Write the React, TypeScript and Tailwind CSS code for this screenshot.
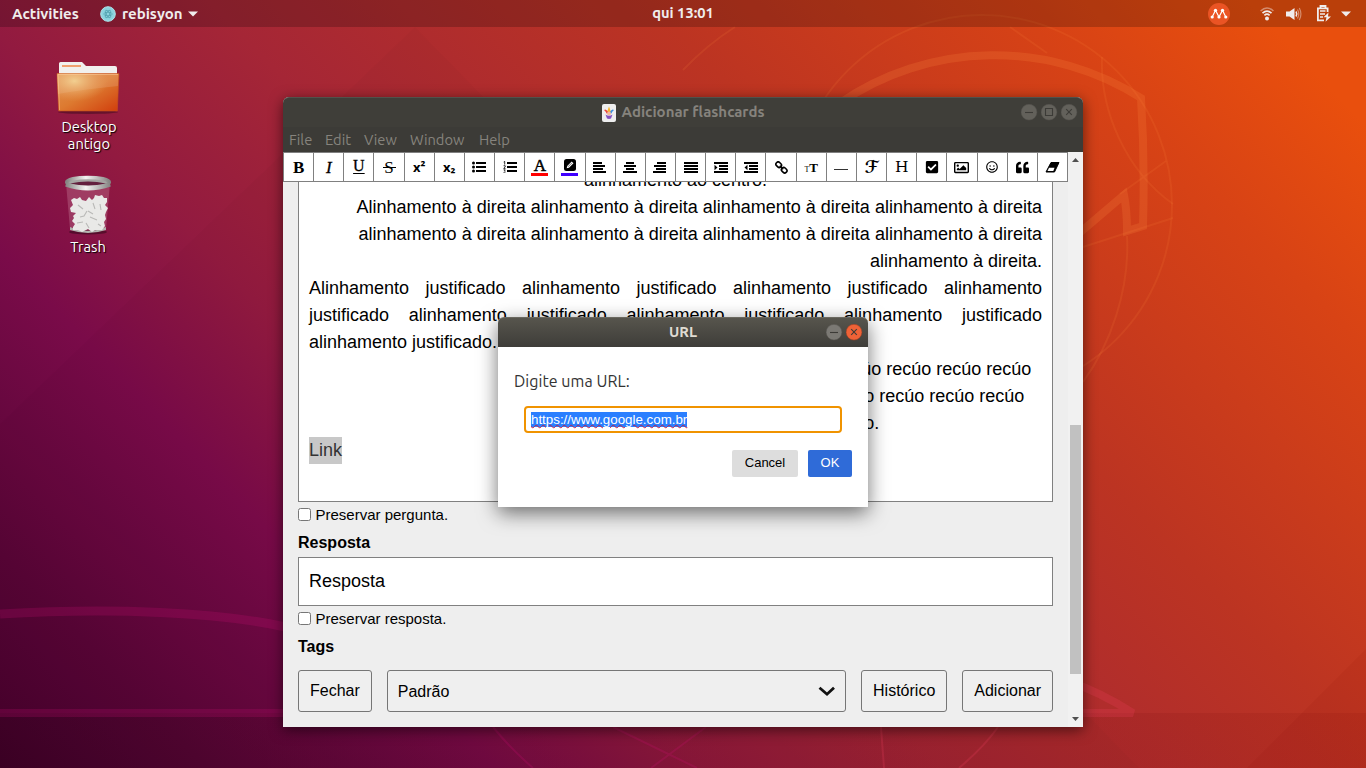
import type { ReactNode } from 'react';
import { FaCheckSquare, FaQuoteLeft, FaRegImage, FaRegSmile } from 'react-icons/fa';

function Wallpaper() {
  return (
    <svg className="absolute inset-0" width="1366" height="768" viewBox="0 0 1366 768">
      <defs>
        <linearGradient id="bg" gradientUnits="userSpaceOnUse" x1="0" y1="768" x2="1076" y2="-264">
          <stop offset="0" stopColor="#440129" />
          <stop offset=".1" stopColor="#570536" />
          <stop offset=".24" stopColor="#7a0b49" />
          <stop offset=".34" stopColor="#921a40" />
          <stop offset=".457" stopColor="#a52636" />
          <stop offset=".67" stopColor="#bc3422" />
          <stop offset=".856" stopColor="#d84315" />
          <stop offset=".96" stopColor="#e94f0d" />
        </linearGradient>
        <linearGradient id="floor">
          <stop offset="0" stopColor="#000" stopOpacity=".12" />
          <stop offset="1" stopColor="#700" stopOpacity=".1" />
        </linearGradient>
      </defs>
      <rect width="1366" height="768" fill="url(#bg)" />
      <path d="M0 424 L415 27 L1366 1000 L0 1000Z" fill="#000" opacity=".018" />
      <path d="M1366 649 L1247 768 H1366Z" fill="#7a0000" opacity=".07" />
      <rect y="713" width="1366" height="55" fill="url(#floor)" />
      <g fill="none" stroke="#d0107a" strokeOpacity=".2">
        <path d="M0 614 Q85 609 160 612.5 T283 626.5 L300 629" strokeWidth="9" />
        <path d="M0 713 H300" strokeWidth="8" />
        <path d="M493 727 Q510 748 533 768 M613 727 L697 768 M706 727 L651 768" strokeWidth="2" />
      </g>
      <g fill="none" stroke="#f04060" strokeOpacity=".22">
        <path d="M1070 682 Q1100 692 1133 713 H1070" strokeWidth="8" strokeLinejoin="bevel" />
        <path d="M881 727 L884 768 M998 727 Q985 746 959 768" strokeWidth="2" />
      </g>
      <g fill="none" stroke="#ff8a40" strokeOpacity=".2">
        <path d="M840 103 A273 273 0 0 1 1141 98 Q1145 160 1143 226 L1127 231 Q1127 210 1124 195 L1070 241" strokeWidth="8" />
        <g strokeOpacity=".13" strokeWidth="2">
          <circle cx="982" cy="205" r="190" />
          <path d="M683 70 Q708 44 735 27 M1010 27 L1047 53 M1102 57 C1100 110 1125 170 1173 204 M1166 161 L1120 194 M1173 218 L1083 247 M1127 236 C1130 290 1110 345 1083 382" />
        </g>
      </g>
    </svg>
  );
}

function TopBar() {
  return (
    <div className="relative flex h-[27px] items-center justify-between bg-black/20 text-[15px] font-bold text-[#f0ecec]">
      <div className="flex h-full flex-1 items-center pl-3 pt-px">
        <span className="w-[68px] whitespace-nowrap">Activities</span>
        <svg className="mb-px ml-[20px]" width="16" height="16" viewBox="0 0 16 16">
          <circle cx="8" cy="8" r="7.3" fill="#8bd3de" stroke="#aee4ea" />
          <g fill="none" stroke="#4f9fac" strokeWidth=".7">
            <ellipse cx="8" cy="8" rx="4.3" ry="1.8" />
            <ellipse cx="8" cy="8" rx="4.3" ry="1.8" transform="rotate(60 8 8)" />
            <ellipse cx="8" cy="8" rx="4.3" ry="1.8" transform="rotate(120 8 8)" />
          </g>
        </svg>
        <span className="ml-[6px] w-[61px] whitespace-nowrap">rebisyon</span>
        <svg className="mb-px ml-[5px]" width="10" height="6"><path d="M0 .5 H10 L5 5.5Z" fill="#f0ecec" /></svg>
      </div>
      <span className="whitespace-nowrap pl-[3px] text-[14.700px]">qui 13:01</span>
      <div className="flex h-full flex-1 items-center justify-end pr-[15px]">
        <svg width="22" height="22" viewBox="0 0 22 22">
          <circle cx="11" cy="11" r="11" fill="#ea5424" />
          <path d="M4.200 14 L7.500 7.300 L11 14 L14.500 7.300 L17.800 14" fill="none" stroke="#fff" strokeWidth="1.200" />
          <g fill="#fff"><circle cx="4.200" cy="14" r="1.600" /><circle cx="7.500" cy="7.300" r="1.600" /><circle cx="11" cy="14" r="1.600" /><circle cx="14.500" cy="7.300" r="1.600" /><circle cx="17.800" cy="14" r="1.600" /></g>
        </svg>
        <svg className="ml-[30px]" width="14" height="14" viewBox="0 0 14 14" fill="none" strokeWidth="1.6">
          <path d="M.6 4 Q7 -2 13.4 4" stroke="#fff" opacity=".4" />
          <path d="M2.5 6.2 Q7 2 11.5 6.2 M4.4 8.4 Q7 6 9.6 8.4" stroke="#f0ecec" />
          <circle cx="7" cy="11.6" r="2" fill="#f0ecec" />
        </svg>
        <svg className="ml-[12px]" width="17" height="14" viewBox="0 0 17 14" fill="none">
          <path d="M0 4.500 H3.500 L8.500 1 V13 L3.500 9.500 H0Z" fill="#f0ecec" />
          <path d="M10 4.500 Q11.500 7 10 9.500" stroke="#f0ecec" strokeWidth="1.5" />
          <path d="M11.500 2.5 Q14 7 11.500 11.5 M13.300 1 Q16.500 7 13.300 13" stroke="#fff" opacity=".4" strokeWidth="1.2" />
        </svg>
        <svg className="ml-[13px]" width="15" height="17" viewBox="0 0 15 17">
          <path d="M4.5 2.6 V1 H9.5 V2.6 M11.600 7 V3.300 H1.900 V15.300 H8" fill="none" stroke="#f0ecec" strokeWidth="1.8" />
          <path d="M4 6 H9.5 M4 9 H9 M4 12 H7" stroke="#f0ecec" strokeWidth="1.5" />
          <path d="M12.5 7.5 L7.5 12.2 H10.5 L9.5 16.8 L15 11.5 H12Z" fill="#f0ecec" />
        </svg>
        <svg className="ml-[10px]" width="10" height="6"><path d="M0 .5 H10 L5 5.5Z" fill="#f0ecec" /></svg>
      </div>
    </div>
  );
}

function FolderIcon() {
  return (
    <svg width="64" height="54" viewBox="0 0 64 54">
      <defs>
        <linearGradient id="folder" x1="0" y1="0" x2="1" y2="1">
          <stop offset="0" stopColor="#e29452" /><stop offset=".5" stopColor="#dd7a30" /><stop offset="1" stopColor="#d13d0c" />
        </linearGradient>
        <radialGradient id="glow" cx=".28" cy=".2" r=".55"><stop offset="0" stopColor="#f2cf90" /><stop offset="1" stopColor="#e9a060" stopOpacity="0" /></radialGradient>
      </defs>
      <ellipse cx="32" cy="51" rx="30" ry="2" fill="#000" opacity=".3" />
      <path d="M3 14 V2.500 Q3 1 4.500 1 H26 L30 5 H59 Q61 5 61 7 V14Z" fill="#f1f0ee" />
      <rect x="6" y="4" width="19" height="2" fill="#f0a070" />
      <path d="M1 12.500 H63 L61.3 50 H2.7Z" fill="url(#folder)" stroke="#c8501c" strokeWidth=".6" />
      <path d="M1.5 13 H62.5 L62 25 Q30 28 2 33Z" fill="#fff" opacity=".12" />
      <path d="M1 12.500 H63 L61.3 50 H2.7Z" fill="url(#glow)" />
      <path d="M2 13.500 H62 M2 13.500 L3.5 49" stroke="#ffd0a0" opacity=".5" fill="none" />
    </svg>
  );
}

function TrashIcon() {
  return (
    <svg width="48" height="60" viewBox="0 0 48 60">
      <defs>
        <linearGradient id="rim" x1="0" x2="1"><stop offset="0" stopColor="#858583" /><stop offset=".45" stopColor="#f4f4f2" /><stop offset="1" stopColor="#858583" /></linearGradient>
      </defs>
      <ellipse cx="24" cy="57" rx="19" ry="2.5" fill="#000" opacity=".35" />
      <path d="M2 8 L6 54 Q24 60 42 54 L46 8Z" fill="#d8a0b4" opacity=".28" />
      <path d="M6 52 Q24 60 42 52 L42 55 Q24 61 6 55Z" fill="#b4b4b0" />
      <path d="M7 25 L10 23 L13 24 L16 22 L18 25 L22 26 L25 22 L28 25 L30 23 L31 20 L35 21 L38 20 L40 23 L43 23 L43 27 L41 30 L44 33 L42 37 L41 40 L42 44 L40 47 L41 51 L38 55 L31 55 L28 57 L24 54 L18 57 L14 55 L9 55 L9 52 L11 49 L8 46 L10 43 L9 41 L12 38 L7 37 L6 33 L9 30Z" fill="#e9e9e7" />
      <path d="M14 30 L19 34 M23 36 L20 41 L16 42 M24 36 L29 39 M29 28 L31 34 M26 42 L33 45 M13 48 L19 47 M22 48 L25 53 M36 29 L37 35 M34 49 L37 51" stroke="#b9b9b7" strokeWidth="1.100" fill="none" />
      <ellipse cx="24" cy="7.2" rx="21.3" ry="4.800" fill="#a5a5a2" stroke="url(#rim)" strokeWidth="3.500" />
      <path d="M6 8.500 Q24 4.500 42 8.500 Q24 12.500 6 8.500Z" fill="#63203e" />
      <path d="M1.800 9.5 Q24 17.500 46.200 9.5" fill="none" stroke="url(#rim)" strokeWidth="4" />
    </svg>
  );
}

function DesktopIcons() {
  return (
    <div className="relative flex w-[176px] flex-col items-center pt-[34px] text-center text-[14.700px] leading-[17px] text-white [text-shadow:1px_1px_1px_#000]">
      <FolderIcon />
      <div className="mt-[3px] w-[64px] pl-[2px]">Desktop antigo</div>
      <div className="mt-[23px]"><TrashIcon /></div>
      <div className="mt-[3px]">Trash</div>
    </div>
  );
}

function AlignIcon({ rows }: { rows: [number, number][] }) {
  return (
    <svg width="14" height="11" viewBox="0 0 14 11">
      {rows.map(([x, w], i) => <rect key={i} x={x} y={i * 3} width={w} height="2" />)}
    </svg>
  );
}

function IndentIcon({ out }: { out?: boolean }) {
  return (
    <svg width="14" height="11" viewBox="0 0 14 11">
      <path d="M0 0H14V2H0Z M5 3H14V5H5Z M5 6H14V8H5Z M0 9H14V11H0Z" />
      <path d={out ? 'M3.5 2.800 V8.200 L.5 5.500Z' : 'M.5 2.800 V8.200 L3.500 5.500Z'} />
    </svg>
  );
}

function Letter({ children, cls = '' }: { children: ReactNode; cls?: string }) {
  return <span className={`font-['Liberation_Serif',serif] text-[17px] leading-none ${cls}`}>{children}</span>;
}

const tools: ReactNode[] = [
  <Letter cls="font-bold">B</Letter>,
  <Letter cls="italic [-webkit-text-stroke:0.3px_#000]">I</Letter>,
  <Letter cls="-mt-[2px] !text-[16px] underline decoration-1 underline-offset-[2px] [-webkit-text-stroke:0.3px_#000]">U</Letter>,
  <span className="relative flex items-center justify-center"><Letter>S</Letter><i className="absolute h-px w-[13px] bg-black" /></span>,
  <span className="pt-[2px] text-[13px] font-bold">x²</span>,
  <span className="pt-[2px] text-[13px] font-bold">x₂</span>,
  <svg width="14" height="12" viewBox="0 0 14 12"><circle cx="1.500" cy="2" r="1.500" /><circle cx="1.500" cy="6" r="1.500" /><circle cx="1.500" cy="10" r="1.500" /><path d="M4 1H14V3H4Z M4 5H14V7H4Z M4 9H14V11H4Z" /></svg>,
  <svg width="14" height="12" viewBox="0 0 14 12"><path d="M4 1H14V3H4Z M4 5H14V7H4Z M4 9H14V11H4Z" /><path d="M.7 1 L1.700 .4 V3.600 M.6 4.700 H2.200 V6 L.7 7.400 H2.500 M.6 8.800 H2.200 L1.500 10.100 Q2.600 10.500 2 11.500 T.5 11.700" fill="none" stroke="#000" strokeWidth=".8" /></svg>,
  <span className="flex flex-col items-center pt-[1px]"><Letter cls="h-[14px] !leading-[13px] [-webkit-text-stroke:0.500px_#000]">A</Letter><i className="h-[3px] w-[17px] bg-[#ff0000]" /></span>,
  <span className="flex flex-col items-center pt-[1px]"><svg width="12" height="12" viewBox="0 0 12 12"><rect width="12" height="12" rx="2.500" /><path d="M2.700 9.300 L3.200 7 L7.700 2.500 L9.500 4.300 L5 8.800Z" fill="#fff" /><path d="M4 7.800 L8 3.800" stroke="#000" strokeWidth=".5" /></svg><i className="mt-[2px] h-[3px] w-[17px] bg-[#4000ff]" /></span>,
  <AlignIcon rows={[[0, 9], [0, 12], [0, 10], [0, 13]]} />,
  <AlignIcon rows={[[3, 8], [1, 12], [3, 8], [0, 14]]} />,
  <AlignIcon rows={[[4, 9], [1, 12], [3, 10], [0, 13]]} />,
  <AlignIcon rows={[[0, 14], [0, 14], [0, 14], [0, 14]]} />,
  <IndentIcon />,
  <IndentIcon out />,
  <svg width="13" height="13" viewBox="0 0 13 13" fill="none" stroke="#000" strokeWidth="1.600"><rect x="-2.900" y="-2.200" width="5.800" height="4.400" rx="2" transform="translate(3.700 3.700) rotate(45)" /><rect x="-2.900" y="-2.200" width="5.800" height="4.400" rx="2" transform="translate(9.200 9.200) rotate(45)" /><path d="M4.800 4.800 L8.200 8.200" /></svg>,
  <span className="flex items-baseline pt-[1px] font-['Liberation_Serif',serif] leading-none"><span className="text-[8px]">T</span><span className="text-[13px] font-bold">T</span></span>,
  <i className="mt-[4px] h-px w-[14px] bg-[#333]" />,
  <span className="pt-[1px] font-['DejaVu_Serif','DejaVu_Sans',serif] text-[17px] font-bold leading-none">ℱ</span>,
  <span className="pt-[2px] font-['DejaVu_Serif',serif] text-[15.500px] leading-none">H</span>,
  <FaCheckSquare size={14} />,
  <FaRegImage size={15} />,
  <FaRegSmile size={12} />,
  <FaQuoteLeft size={13} />,
  <svg width="15" height="11" viewBox="0 0 15 11"><path d="M6 .5 H14 L9.500 10 H1Z" fill="#000" stroke="#000" strokeLinejoin="round" /><path d="M4 5.800 H9.500 L8.300 9 H2.500Z" fill="#fff" /></svg>,
];

function WindowButton({ kind, close, dim }: { kind: 'min' | 'max' | 'close'; close?: boolean; dim?: boolean }) {
  const fill = close ? '#ee6237' : dim ? '#63615b' : '#7b7974';
  const d = kind === 'min' ? 'M4 8.500H12' : kind === 'max' ? 'M4.500 4.500H11.500V11.500H4.500Z' : 'M5.200 5.200L10.800 10.800M10.800 5.200L5.200 10.800';
  return (
    <svg width="17" height="17" viewBox="0 0 17 17">
      <circle cx="8" cy="8.200" r="7.900" fill={fill} stroke={close ? '#a03c20' : '#55534e'} strokeWidth=".5" />
      <path d={d} fill="none" stroke="#3c3b37" strokeWidth="1.100" />
    </svg>
  );
}

function Joker() {
  return (
    <svg width="14" height="18" viewBox="0 0 14 18">
      <rect width="14" height="18" rx="2" fill="#eeeeee" />
      <path d="M5 8 L7 2.500 L9 8Z" fill="#f7b52c" />
      <path d="M6.500 9 Q4.500 4 2 6 Q3.500 7 5 10Z" fill="#e8453c" />
      <path d="M7.500 9 Q9.500 4 12 6 Q10.500 7 9 10Z" fill="#3c8fe0" />
      <circle cx="7" cy="9.500" r="2" fill="#f0b8a0" />
      <path d="M3.500 10.500 Q7 13 10.500 10.500 L9 14.500 L7 15 L5 14.500Z" fill="#8450c0" />
    </svg>
  );
}

function Preserve({ label }: { label: string }) {
  return (
    <div className="flex h-[26px] items-center text-[15px]">
      <span className="mb-[2px] mr-[4.500px] h-[13px] w-[13px] rounded-[2.500px] border border-[#767676] bg-white" />
      {label}
    </div>
  );
}

function ActionButton({ label }: { label: string }) {
  return <button className="h-[42px] rounded-[3px] border border-[#767676] bg-[#efefef] px-[11px] text-[16px]">{label}</button>;
}

function FlashcardWindow() {
  return (
    <div className="absolute left-[283px] top-[97px] flex h-[630px] w-[800px] flex-col rounded-t-[6px] bg-[#eeeeee] shadow-[0_3px_14px_rgba(0,0,0,0.55)]">
      <div className="grid h-[30px] grid-cols-[1fr_auto_1fr] items-center rounded-t-[6px] border-t border-[#52514b] bg-[#3f3e39] text-[15px] font-bold text-[#86837d]">
        <span />
        <div className="flex items-center gap-[6px]"><Joker /><span className="w-[143px] whitespace-nowrap">Adicionar flashcards</span></div>
        <div className="flex justify-end gap-[3px] pr-[5px]"><WindowButton kind="min" dim /><WindowButton kind="max" dim /><WindowButton kind="close" dim /></div>
      </div>
      <div className="flex h-[25px] items-center bg-[#3c3b37] pl-[6px] pt-[1px] text-[14.700px] text-[#86837d]">
        <span className="w-[36px]">File</span><span className="w-[39px]">Edit</span><span className="w-[46px]">View</span><span className="w-[69px]">Window</span><span>Help</span>
      </div>
      <div className="flex min-h-0 flex-1 font-['Liberation_Sans',Arial,sans-serif] text-black">
        <div className="flex w-[785px] flex-col">
          <div className="grid h-[30px] shrink-0 grid-cols-[repeat(26,minmax(0,1fr))] border-y border-r border-[#808080] bg-white">
            {tools.map((t, i) => (
              <div key={i} className="flex items-center justify-center border-l border-[#808080] font-['Noto_Sans',sans-serif]">{t}</div>
            ))}
          </div>
          <div className="min-h-0 flex-1 overflow-hidden px-[15px]">
            <div className="-mt-[15px] h-[335px] border-x border-b border-[#808080] bg-white px-[10px] text-[18px] leading-[27px]">
              <p className="text-center">alinhamento ao centro.</p>
              <p className="text-right">Alinhamento à direita alinhamento à direita alinhamento à direita alinhamento à direita alinhamento à direita alinhamento à direita alinhamento à direita alinhamento à direita alinhamento à direita.</p>
              <p className="text-justify">Alinhamento justificado alinhamento justificado alinhamento justificado alinhamento justificado alinhamento justificado alinhamento justificado alinhamento justificado alinhamento justificado.</p>
              <p className="pl-[220px]">Recúo recúo recúo recúo recúo recúo recúo recúo recúo recúo recúo recúo recúo recúo recúo recúo recúo recúo recúo recúo recúo recúo recúo recúo recúo recúo recúo.</p>
              <p><span className="inline-block bg-[#c8c8c8] text-[#333]">Link</span></p>
            </div>
            <Preserve label="Preservar pergunta." />
            <div className="flex h-[29px] items-center text-[16px] font-bold">Resposta</div>
            <div className="flex h-[49px] items-center border border-[#808080] bg-white px-[10px] text-[18px]">Resposta</div>
            <Preserve label="Preservar resposta." />
            <div className="flex h-[29px] items-center text-[16px] font-bold">Tags</div>
            <div className="mt-[9px] flex gap-[15px]">
              <ActionButton label="Fechar" />
              <div className="flex h-[42px] flex-1 items-center justify-between rounded-[3px] border border-[#767676] bg-[#efefef] pl-[10px] pr-[10px] pt-[2px] text-[16px]">
                Padrão
                <svg className="mb-px" width="17" height="11" viewBox="0 0 17 11"><path d="M1.500 1.700 L9 8.200 L16 1.700" fill="none" stroke="#111" strokeWidth="2.800" /></svg>
              </div>
              <ActionButton label="Histórico" />
              <ActionButton label="Adicionar" />
            </div>
          </div>
        </div>
        <div className="flex w-[15px] flex-col items-center bg-[#f1f1f1]">
          <svg className="mt-[6px]" width="7" height="4"><path d="M0 4 L3.500 0 L7 4Z" fill="#505050" /></svg>
          <div className="mt-[263px] h-[249px] w-[11px] bg-[#c1c1c1]" />
          <svg className="mt-[43px]" width="7" height="4"><path d="M0 0 L3.500 4 L7 0Z" fill="#505050" /></svg>
        </div>
      </div>
    </div>
  );
}

function UrlDialog() {
  return (
    <div className="absolute left-[498px] top-[317px] flex h-[190px] w-[370px] flex-col rounded-t-[6px] bg-white shadow-[0_6px_20px_rgba(0,0,0,0.55)]">
      <div className="grid h-[30px] grid-cols-[1fr_auto_1fr] items-center rounded-t-[6px] border-t border-[#6a685f] bg-gradient-to-b from-[#57554d] to-[#3e3d39] text-[14.700px] font-bold text-[#dfdbd2]">
        <span /><span>URL</span>
        <div className="flex justify-end gap-[3px] pr-[5px]"><WindowButton kind="min" /><WindowButton kind="close" close /></div>
      </div>
      <div className="flex flex-1 flex-col px-4 pt-[22px]">
        <div className="h-[24px] whitespace-nowrap text-[16px] leading-[24px] tracking-[0.05px] text-[#333]">Digite uma URL:</div>
        <div className="mx-[10px] mt-[13px] flex h-[27px] items-center rounded-[4px] border-2 border-[#f09300] bg-white pl-[5px] font-['Liberation_Sans',sans-serif] text-[13.333px] leading-[15px] text-white">
          <span className="bg-[#2a7fff] underline decoration-[#c0204a] decoration-wavy decoration-[0.700px] underline-offset-0">https://www.google.com.br</span>
        </div>
        <div className="mt-[17px] flex justify-end gap-[10px] font-['Liberation_Sans',sans-serif] text-[13px]">
          <button className="h-[27px] w-[66px] rounded-[2px] bg-[#dddddd] pb-[2px] text-black">Cancel</button>
          <button className="h-[27px] w-[44px] rounded-[2px] bg-[#2f6bd8] pb-[2px] text-white">OK</button>
        </div>
      </div>
    </div>
  );
}

export default function App() {
  return (
    <div className="relative h-[768px] w-[1366px] overflow-hidden font-['Ubuntu','Noto_Sans',sans-serif]">
      <Wallpaper />
      <TopBar />
      <DesktopIcons />
      <FlashcardWindow />
      <UrlDialog />
    </div>
  );
}
